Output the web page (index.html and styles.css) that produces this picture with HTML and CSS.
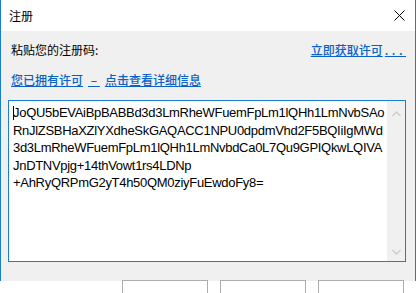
FILE: index.html
```html
<!DOCTYPE html>
<html lang="zh-CN">
<head>
    <meta charset="UTF-8">
    <meta name="viewport" content="width=device-width, initial-scale=1.0">
    <title>注册</title>
    <link rel="stylesheet" href="styles.css">
</head>
<body>
    <div class="window">
        <div class="titlebar">
            <span class="title">注册</span>
            <svg class="close" width="11" height="11" viewBox="0 0 11 11">
                <path d="M0.5 0.5 L10.5 10.5 M10.5 0.5 L0.5 10.5" stroke="#000" stroke-width="1" fill="none"/>
            </svg>
        </div>
        <div class="content">
            <div class="top-row">
                <span class="label">粘贴您的注册码:</span>
                <a class="link" href="#">立即获取许可<span class="dots">...</span></a>
            </div>
            <div class="info-row">
                <a class="link" href="#">您已拥有许可<span class="dash"> – </span>点击查看详细信息</a>
            </div>
            <div class="code-box">
                <div class="code-text"><span class="caret"></span>JoQU5bEVAiBpBABBd3d3LmRheWFuemFpLm1lQHh1LmNvbSAo<br>RnJlZSBHaXZlYXdheSkGAQACC1NPU0dpdmVhd2F5BQIiIgMWd<br>3d3LmRheWFuemFpLm1lQHh1LmNvbdCa0L7Qu9GPIQkwLQIVA<br>JnDTNVpjg+14thVowt1rs4LDNp<br>+AhRyQRPmG2yT4h50QM0ziyFuEwdoFy8=</div>
                <div class="scrollbar">
                    <svg width="9" height="6" viewBox="0 0 9 6"><path d="M0.5 5 L4.5 1 L8.5 5" stroke="#cdcdcd" stroke-width="1.5" fill="none"/></svg>
                    <svg width="9" height="6" viewBox="0 0 9 6"><path d="M0.5 1 L4.5 5 L8.5 1" stroke="#cdcdcd" stroke-width="1.5" fill="none"/></svg>
                </div>
            </div>
        </div>
    </div>
    <div class="buttons">
        <button class="btn" type="button"></button>
        <button class="btn" type="button"></button>
        <button class="btn" type="button"></button>
    </div>
</body>
</html>
```

FILE: styles.css
```css
body {
    margin: 0;
    background: #fff;
    font-family: "Noto Sans CJK SC", "Liberation Sans", sans-serif;
    font-size: 12px;
    color: #000;
    width: 416px;
    height: 293px;
    overflow: hidden;
}
.window {
    height: 281px;
    border-left: 1px solid #1b7fd1;
    border-right: 1px solid #1b7fd1;
    display: flex;
    flex-direction: column;
}
.titlebar {
    height: 31px;
    background: #fff;
    display: flex;
    align-items: center;
    justify-content: space-between;
    padding: 0 10px 0 8px;
    flex-shrink: 0;
}
.title {
    font-size: 12px;
    line-height: 16px;
    margin-top: 1px;
}
.close {
    display: block;
    margin-top: -1px;
}
.content {
    flex: 1;
    background: #f0f0f0;
    padding: 11px 9px 0 7px;
}
.top-row {
    display: flex;
    justify-content: space-between;
    align-items: center;
    height: 16px;
    padding-left: 3px;
}
.info-row {
    height: 16px;
    margin-top: 13px;
    padding-left: 3px;
}
.label {
    line-height: 16px;
}
.link {
    color: #0a62c9;
    line-height: 16px;
    font-weight: 500;
    text-decoration: underline;
    text-underline-offset: 1px;
}
.dots {
    letter-spacing: 3.5px;
    margin-left: 2px;
}
.dash {
    padding: 0 5px;
}
.code-box {
    margin-top: 13px;
    height: 160px;
    border: 1px solid #1b7fd1;
    background: #fff;
    display: flex;
}
.code-text {
    flex: 1;
    padding: 3px 0 0 4px;
    font-family: "Liberation Sans", "Noto Sans", sans-serif;
    font-size: 13px;
    letter-spacing: -0.3px;
    line-height: 17.5px;
    color: #000;
    white-space: nowrap;
    overflow: hidden;
}
.caret {
    display: inline-block;
    width: 1px;
    height: 14px;
    background: #000;
    vertical-align: -3px;
    margin-right: -1px;
}
.scrollbar {
    width: 18px;
    background: #f0f0f0;
    display: flex;
    flex-direction: column;
    justify-content: space-between;
    align-items: center;
    padding: 10px 0 6px;
}
.scrollbar svg {
    display: block;
}
.buttons {
    display: flex;
    justify-content: flex-end;
    gap: 12px;
    padding-right: 12px;
    margin-top: -1px;
}
.btn {
    width: 86px;
    height: 24px;
    border: 1px solid #adadad;
    background: #fff;
    padding: 0;
}
```
